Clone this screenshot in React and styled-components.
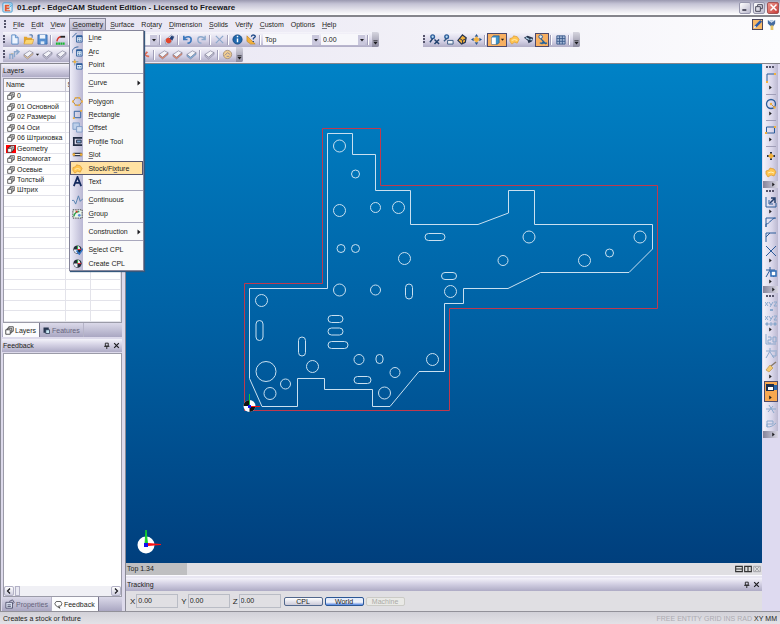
import React, { useState } from 'react';
import styled, { createGlobalStyle, css } from 'styled-components';

const GlobalStyle = createGlobalStyle`
  * { box-sizing: border-box; }
  body { margin: 0; }
  body, button, input, select {
    font-family: "Liberation Sans", Arial, sans-serif;
    font-size: 7px;
    line-height: 9px;
    color: #1c1c20;
  }
  button { border: 0; padding: 0; background: none; }
  svg { display: block; }
  u { text-underline-offset: 1px; text-decoration-thickness: 1px; text-decoration-color: #77777f; }
`;

const Window = styled.div`
  display: flex;
  flex-direction: column;
  min-height: 100vh;
  background: #e8e6f2;
`;

const TitleBar = styled.header`
  display: flex;
  align-items: center;
  height: 17px;
  padding: 0 1px 0 2px;
  background: linear-gradient(#9a99b0, #c3c2d4 25%, #e9e8ef 70%, #fff);
  border-bottom: 2px solid #85858c;
`;

const Title = styled.h1`
  flex: 1;
  margin: 0 0 0 4px;
  font-size: 8px;
  line-height: 10px;
  font-weight: bold;
  color: #17171b;
`;

const CaptionButton = styled.button`
  display: grid;
  place-items: center;
  width: 12px;
  height: 12px;
  margin-left: 2px;
  border: 1px solid ${p => (p.$close ? '#a55355' : '#9797ad')};
  border-radius: 2px;
  background: ${p => (p.$close ? 'linear-gradient(135deg, #ee9a90, #c83a37)' : 'linear-gradient(135deg, #fff, #b9b8cc)')};
`;

const MenuBar = styled.nav`
  display: flex;
  align-items: center;
  height: 15px;
  padding: 0 2px 0 4px;
  background: linear-gradient(90deg, #e5e2f2, #f3f2f8 60%, #fcfcfe);
`;

const MenuList = styled.div`
  display: flex;
  flex: 1;
  gap: 1px;
  margin-left: 2px;
`;

const MenuHolder = styled.div`
  position: relative;
`;

const MenuButton = styled.button`
  display: block;
  height: 13px;
  padding: 0 2px;
  border: 1px solid transparent;
  ${p => p.$open && css`
    border-color: #88889a;
    border-bottom-color: #cdcbe0;
    background: linear-gradient(#dedcea, #b9b7cd);
  `}
`;

const Popup = styled.div`
  position: absolute;
  z-index: 5;
  top: 12px;
  left: 0;
  display: flex;
  flex-direction: column;
  width: 75px;
  height: 241px;
  border: 1px solid #85859a;
  background: linear-gradient(90deg, #eeedf8, #b9b7d3 13px, #fafafa 13px);
  box-shadow: 1px 1px 1px #36587c;
`;

const PopupItem = styled.button`
  display: flex;
  align-items: center;
  flex: 1;
  min-height: 0;
  text-align: left;
  border: 1px solid ${p => (p.$active ? '#55556e' : 'transparent')};
  background: ${p => (p.$active ? '#ffe1a2' : 'none')};
`;

const PopupIcon = styled.span`
  flex: none;
  width: 17px;
  padding-left: 1px;
`;

const PopupLabel = styled.span`
  flex: 1;
  white-space: nowrap;
`;

const PopupRule = styled.div`
  height: 5px;
  margin-left: 18px;
  background: linear-gradient(transparent 2px, #a9a8bd 2px, #a9a8bd 3px, transparent 3px);
`;

const ToolArea = styled.div`
  display: flex;
  flex-direction: column;
  height: 32px;
  border-bottom: 1px solid #85858c;
  background: linear-gradient(90deg, #e5e2f2, #f3f2f8 60%, #fcfcfe);
`;

const ToolLine = styled.div`
  display: flex;
  height: 15px;
  padding-left: 3px;
  gap: 44px;
`;

const ToolBar = styled.div`
  display: flex;
  align-items: center;
  height: 15px;
  background: linear-gradient(#f6f5fb, #d5d2e6 60%, #b0adc6);
  border-radius: 0 2px 2px 0;
`;

const Grip = styled.span`
  flex: none;
  width: ${p => (p.$flat ? '9px' : '4px')};
  height: ${p => (p.$flat ? '3px' : '9px')};
  background: radial-gradient(circle at 1px 1px, #55546b 1px, transparent 1px) 0 0 / ${p => (p.$flat ? '3px 4px' : '4px 3px')};
`;

const ToolButton = styled.button`
  flex: none;
  display: flex;
  align-items: center;
  justify-content: center;
  width: ${p => (p.$wide ? '20px' : '14px')};
  height: 14px;
  ${p => p.$active && css`
    border: 1px solid #4d4a6c;
    background: #f7b062;
  `}
`;

const Divider = styled.span`
  flex: none;
  width: 4px;
  height: 10px;
  background: linear-gradient(90deg, transparent 1px, #a09eb8 1px, #a09eb8 2px, #fff 2px, #fff 3px, transparent 3px);
`;

const BarEnd = styled.button`
  display: flex;
  align-items: flex-end;
  justify-content: center;
  width: 7px;
  height: 15px;
  margin-left: 2px;
  padding-bottom: 2px;
  background: linear-gradient(#d6d5df, #8c8a9f);
  border-radius: 0 2px 2px 0;
`;

const SelectBox = styled.label`
  display: flex;
  align-items: center;
  width: ${p => p.$width}px;
  height: 11px;
  margin: 0 1px;
  background: #f7f7fb;

  select {
    flex: 1;
    min-width: 0;
    height: 11px;
    padding: 0 2px;
    border: 0;
    appearance: none;
    background: none;
  }

  span {
    display: grid;
    place-items: center;
    width: 7px;
    height: 10px;
    background: #c9c7dc;
  }
`;

const Workspace = styled.div`
  display: flex;
  flex: 1;
`;

const LeftDock = styled.aside`
  display: flex;
  flex-direction: column;
  flex: none;
  width: 126px;
  padding: 0 3px 0 1px;
  border-left: 1px solid #8a8a96;
  border-right: 1px solid #8a8a96;
  background: #dddaeb;
`;

const PanelHead = styled.div`
  display: flex;
  align-items: center;
  height: 13px;
  padding: 0 2px 0 1px;
  gap: 3px;
  background: linear-gradient(#f4f3fa, #d4d1e4 45%, #aeabc5);

  h2 {
    flex: 1;
    margin: 0;
    font-size: 7px;
    font-weight: normal;
  }
`;

const LayerBox = styled.div`
  height: 245px;
  margin: 1px 0 0 1px;
  border: 1px solid #9b9ba8;
  background: #fff;
  overflow: hidden;
`;

const LayerTable = styled.table`
  width: 100%;
  height: 243px;
  border-collapse: collapse;
  table-layout: fixed;

  th, td {
    height: 10px;
    padding: 0;
    font-weight: normal;
    line-height: 8px;
    text-align: left;
    white-space: nowrap;
    border-right: 1px solid #e3e3ea;
    border-bottom: 1px solid #e3e3ea;
  }
  th {
    height: 12px;
    padding: 0 2px;
    background: #f6f5f9;
    border-color: #c5c4d2;
  }
`;

const LayerName = styled.span`
  display: flex;
  align-items: center;
  gap: 1px;
  padding-left: 2px;

  span {
    padding: 0 1px;
    background: ${p => (p.$current ? '#f00' : 'none')};
  }
`;

const TabRow = styled.div`
  display: flex;
  height: 14px;
  padding-left: 1px;
  background: linear-gradient(#dbd9e9, #aaa7c2);
`;

const Tab = styled.button`
  display: flex;
  align-items: center;
  gap: 1px;
  padding: 0 3px 0 2px;
  color: ${p => (p.$active ? '#1c1c20' : '#66647c')};
  background: ${p => (p.$active ? '#fcfcfe' : 'none')};
  border-right: 1px solid ${p => (p.$active ? '#77758d' : '#b6b4c8')};
`;

const FeedbackBox = styled.div`
  display: flex;
  flex-direction: column;
  justify-content: flex-end;
  flex: 1;
  margin: 1px 0 0 1px;
  border: 1px solid #9b9ba8;
  background: #fff;
`;

const ScrollTrack = styled.div`
  display: flex;
  justify-content: space-between;
  height: 10px;
  background: #f0f0f5;

  button {
    display: grid;
    place-items: center;
    width: 10px;
    border: 1px solid #b3b2c6;
    border-radius: 2px;
    background: linear-gradient(#fff, #d0cfe0);
  }
  i {
    flex: none;
    width: 5px;
    margin: 0 auto 0 1px;
    border: 1px solid #b3b2c6;
    background: #e9e9f2;
  }
`;

const Center = styled.main`
  display: flex;
  flex-direction: column;
  flex: 1;
  min-width: 0;
`;

const Viewport = styled.div`
  flex: 1;
  overflow: hidden;
  background: linear-gradient(#0082c6, #0062a5 50%, #003f7d);
`;

const ViewStrip = styled.div`
  display: flex;
  align-items: center;
  height: 13px;
  padding-right: 1px;
  gap: 1px;
  background: #e0dfe3;
  border-bottom: 1px solid #fbfaff;

  p {
    width: 61px;
    height: 12px;
    margin: 0 auto 0 0;
    padding: 1px 0 0 1px;
    background: #bfbfc1;
  }
`;

const DockedHead = styled(PanelHead)`
  margin-top: 2px;
`;

const Tracking = styled.form`
  display: flex;
  align-items: center;
  height: 20px;
  padding-left: 4px;
  gap: 2px;
  background: #e0dfe3;
`;

const Coord = styled.label`
  display: flex;
  align-items: center;
  gap: 1px;
  margin-right: 1px;
  font-size: 8px;

  input {
    width: 42px;
    height: 14px;
    padding: 0 1px 2px;
    border: 1px solid #b9bcc5;
    background: #e0dfe3;
  }
`;

const PlaneButton = styled.button`
  width: 39px;
  height: 9px;
  line-height: 7px;
  border: 1px solid #52688c;
  border-radius: 2px;
  background: linear-gradient(#fff, #cbcad9);
  ${p => p.$active && css`
    border-color: #2b5795;
    background: linear-gradient(#dfeafc, #f3f3f8 60%, #4f83e2);
  `}
  &:disabled {
    color: #aaaaa6;
    border-color: #cbcbc6;
    background: #e9e9e6;
  }
`;

const RightDock = styled.aside`
  flex: none;
  width: 18px;
  padding: 0 2px 0 1px;
  background: #dedaf0;
`;

const SideBar = styled.div`
  display: flex;
  flex-direction: column;
  align-items: center;
  justify-content: space-between;
  height: ${p => p.$height}px;
  padding-top: 2px;
  background: linear-gradient(90deg, #f4f3fa, #d9d6ea 60%, #bbb8d0);
`;

const SideButton = styled.button`
  display: flex;
  flex-direction: column;
  align-items: center;
  justify-content: center;
  gap: 1px;
  width: 14px;
  ${p => p.$active && css`
    height: 21px;
    border: 1px solid #4d4a6c;
    background: #f7a850;
  `}
`;

const SideRule = styled.span`
  width: 10px;
  height: 1px;
  background: #a09eb8;
`;

const SideEnd = styled.button`
  display: flex;
  align-items: center;
  justify-content: flex-end;
  align-self: stretch;
  height: 7px;
  padding-right: 2px;
  background: linear-gradient(90deg, #858399, #d8d6e2);
`;

const StatusBar = styled.footer`
  display: flex;
  align-items: center;
  height: 13px;
  padding: 0 3px;
  gap: 2px;
  background: linear-gradient(#d2d1d8, #e3e2e7);
  border-top: 1px solid #929199;

  p {
    flex: 1;
    margin: 0;
  }
`;

const Flag = styled.span`
  color: ${p => (p.$on ? '#1c1c20' : '#acabb2')};
`;

const N = '#2c5c9a';
const S = '#8ba8cc';
const Y = '#f2b13c';
const block = (c) => (
  <>
    <path d="M1 6l6-4 4 2-6 5z" fill="#f3f3f8" stroke="#8a8aa0" strokeWidth=".8" />
    <path d="M1 6v2l4 3 6-5V4L5 9z" fill={c} stroke="#77778e" strokeWidth=".5" />
  </>
);
const cpl = (
  <>
    <circle cx="6" cy="6" r="4.5" fill="#222b38" />
    <path d="M6 6H2a4 4 0 0 0 4 4zM6 6V2a4 4 0 0 1 3 4z" fill="#e7edf5" />
    <path d="M6 6V2" stroke="#2fae3b" />
    <path d="M6 6h4" stroke="#e23" />
  </>
);

const shapes = {
  logo: <><rect x="1" y="1" width="10" height="10" rx="1" fill="#d9edfa" stroke="#3c97cf" /><path d="M3 3h5v2H5v1h3v2H5v1h4v1H3z" fill="#e0562f" /><path d="M8 2l2 2-2 2" stroke="#289bd7" fill="none" /></>,
  new: <><path d="M3 1h4l3 3v7H3z" fill="#eef5ff" stroke="#5a8bc6" /><path d="M7 1v3h3" fill="none" stroke="#5a8bc6" /></>,
  open: <><path d="M1 3h3l1 1h5v7H1z" fill="#e3a52f" /><path d="M3 6h9l-2 5H1z" fill="#fbd672" stroke="#c98b22" strokeWidth=".5" /><path d="M7 1h3v3" stroke={N} fill="none" /></>,
  save: <><path d="M1 1h10v10H1z" fill="#568fd0" stroke="#2e64a8" strokeWidth=".8" /><path d="M3 1h6v4H3z" fill="#eef4fc" /><path d="M4 8h4v3H4z" fill="#dce8f6" /></>,
  style: <><path d="M1 10.500h10" stroke="#18b830" strokeWidth="2.500" strokeDasharray="2 .5" /><path d="M2 8c1-5 4-5 5-5" stroke="#d8352a" strokeWidth="1.500" fill="none" /><path d="M6 3h5" stroke="#222" strokeWidth="2" /></>,
  render: <><path d="M1 7l7-6 3 2-4 7-5 1z" fill="#e9ecf3" stroke="#65769a" strokeWidth=".6" /><circle cx="5" cy="7" r="3" fill="#e2452c" /><path d="M8 2l3 1-2 4-3-2z" fill="#233f77" /></>,
  undo: <path d="M2 2v4h4M2 6c2-4 8-4 8 0 0 3-2 4-4 4" stroke="#3c78bd" strokeWidth="1.8" fill="none" />,
  redo: <path d="M10 2v4H6M10 6C8 2 2 2 2 6c0 3 2 4 4 4" stroke={S} strokeWidth="1.5" fill="none" />,
  cross: <path d="M2 2l8 8M10 2l-8 8" stroke={S} strokeWidth="1.3" />,
  info: <><circle cx="6" cy="6" r="5" fill="#1f68ac" stroke="#164a83" /><path d="M6 5v4M6 2v1.6" stroke="#fff" strokeWidth="1.6" /></>,
  help: <><path d="M1 2l9 9H5L1 8z" fill={Y} stroke="#b77f20" strokeWidth=".6" /><path d="M6 3c0-3 5-2 4 0L8 5v1M8 7.500v1.300" stroke="#1b4685" strokeWidth="1.4" fill="none" /></>,
  moveA: <><path d="M1 11V6h3v5M6 9V3h4M8 1l3 2-3 3" stroke={S} strokeWidth="1.5" fill="none" /><path d="M2 5h3" stroke="#c3b8a0" /></>,
  gray: block('#c3c1d4'),
  orange: block('#e98b6a'),
  blueBlock: block('#7fb2df'),
  tan: block('#e7c79a'),
  tree: <path d="M3 3l5 5M8 3L3 9M8 8h2" stroke="#e26b54" strokeWidth="2" />,
  spin: <><circle cx="6" cy="6" r="4.500" fill="#f2ce90" stroke="#a6917a" /><path d="M3 7l3-3 3 2M5 8h3" stroke="#8c8799" fill="none" /></>,
  zoomX: <><circle cx="4" cy="3" r="2" fill="#b9dbf0" stroke={N} strokeWidth="1.5" /><path d="M4 5L1 9M6 6l5 5M11 6l-5 5" stroke="#21426e" strokeWidth="1.6" /></>,
  zoomBox: <><circle cx="4" cy="3" r="2" fill="#b9dbf0" stroke={N} strokeWidth="1.5" /><path d="M4 5L1 8" stroke="#35577f" strokeWidth="1.5" /><path d="M5 7h6v4H5z" stroke="#35577f" fill="#eef3f8" /></>,
  orbit: <><path d="M6 1l4 3-1 5-4 2-4-4z" fill={Y} stroke="#24324e" strokeWidth="1.3" /><path d="M3 5l3 2 4-2M6 7v3" stroke="#24324e" fill="none" /></>,
  pan: <><path d="M6 0l2 3H4zM6 12l2-3H4zM0 6l3-2v4zM12 6L9 4v4z" fill="#28568f" /><path d="M6 3v6M3 6h6" stroke={Y} strokeWidth="2.5" /></>,
  cube: <><path d="M2 3l2-2h7v8l-2 2H2z" fill="#3d93c9" stroke="#184c82" strokeWidth=".7" /><path d="M2 3h5v8H2z" fill="#fff" /></>,
  stock: <><path d="M1 5l3-1 1-2 4 1 2 3-2 4-3-1-3 2-2-3z" fill="#ffc552" stroke="#d9962c" strokeWidth=".7" /><path d="M3 7l3-1 3 1" stroke="#fff0b8" fill="none" /></>,
  machine: <><path d="M1 4l4-2 6 2-1 4-4 2-1-3z" fill="#26354e" /><path d="M3 4l4 2M8 6h2" stroke="#b5d9ef" strokeWidth="1.5" /></>,
  walk: <><circle cx="4" cy="3" r="2" fill="#d8e9f4" stroke={N} /><path d="M4 5l3 3-2 3M6 7l4 4M3 10h8" stroke="#22629c" strokeWidth="1.4" fill="none" /></>,
  grid: <path d="M2 2h9v9H2zM2 5h9M2 8h9M5 2v9M8 2v9" stroke="#3c5c8c" fill="#a8bbd8" />,
  pencil: <><rect x=".5" y=".5" width="11" height="11" fill="#f8b866" stroke="#3c3a58" /><path d="M2 10l1-3 6-6 2 2-6 6z" fill="#2c5caa" /><path d="M2 10l1-3 2 2z" fill="#fff" /></>,
  bulb: <><path d="M2 1l4 3 4-3v4L8 8H5L2 5z" fill="#456ca0" /><path d="M4 1h4v2H4z" fill="#b8cde6" /><path d="M5 7h3v5H5z" fill="#e4c468" /></>,
  line: <><path d="M0 6l5-5" stroke={N} /><path d="M5 4h6v7H5z" fill="#e9f4fd" stroke={N} /><path d="M5 5h6M7 7v1M9 7v1M7 9v1M9 9v1" stroke={N} strokeWidth="1.3" /></>,
  arc: <><path d="M0 8c0-5 3-7 7-7" stroke={N} fill="none" /><path d="M5 4h6v7H5z" fill="#e9f4fd" stroke={N} /><path d="M5 5h6M7 7v1M9 7v1M7 9v1M9 9v1" stroke={N} strokeWidth="1.3" /></>,
  point: <><path d="M3 0v7M0 3h7" stroke="#7592a0" /><circle cx="3" cy="3" r="1.500" fill={Y} /><path d="M5 5h6v6H5z" fill="#e9f4fd" stroke={N} /><path d="M5 6h6M7 8v1M9 8v1" stroke={N} strokeWidth="1.3" /></>,
  polygon: <><path d="M4 2h4l3 4-3 4H4L1 6z" fill="none" stroke="#8c7a63" /><path d="M3 1h2v2H3zM7 1h2v2H7zM10 5h2v2h-2zM7 9h2v2H7zM3 9h2v2H3zM0 5h2v2H0z" fill={Y} /></>,
  rectangle: <><path d="M2.500 2.500h7v7h-7z" fill="none" stroke={N} /><path d="M1 9h2v2H1zM9 1h2v2H9z" fill={Y} /></>,
  offset: <><path d="M1 1h7v7H1z" fill="#bdcfea" stroke="#7d9bc6" /><path d="M5 5h6v6H5z" fill="#d4def0" stroke="#7d9bc6" /></>,
  profile: <><path d="M2 1v10M1 2h10M1 10h10" stroke="#222d44" strokeWidth="1.800" /><path d="M5 4.500h5v3H5z" fill="#7eaad8" stroke="#222d44" /></>,
  slot: <><rect x="1" y="4" width="10" height="4" rx="1" fill="#33384a" /><path d="M3 6h6" stroke="#fff" /><circle cx="2" cy="6" r="1.500" fill={Y} /><circle cx="10" cy="6" r="1.500" fill={Y} /></>,
  text: <path d="M2 11L6 1l4 10M3 7.500h6" stroke="#13295c" strokeWidth="1.900" fill="none" />,
  continuous: <path d="M0 7h2l2 4 3-9 2 6 3-3" stroke="#4e7dac" fill="none" />,
  group: <><path d="M1 2h10v9H1z" fill="#eaf6ec" stroke="#333" strokeDasharray="1.500 1" /><path d="M2 9c1-4 3-5 6-5" stroke="#29a04b" strokeWidth="1.500" fill="none" /><path d="M4 4h2" stroke="#d33" strokeWidth="2" /><circle cx="8" cy="8" r="1.500" fill="#5a8bd6" /></>,
  selectCpl: <>{cpl}<path d="M5 7l3 4 4-6" stroke="#2f72c4" strokeWidth="1.700" fill="none" /></>,
  createCpl: cpl,
  layer: <><path d="M5 1h6v6H5z" fill="#fff" stroke="#222" /><path d="M3 3h6v6H3z" fill="#fff" stroke="#222" /><path d="M1 5h6v6H1z" fill="#fff" stroke="#222" /></>,
  feature: <><path d="M2 2h7v7H2z" fill="#25334d" /><path d="M5 5h5v5H5z" fill="#c8e9f5" stroke="#25334d" /></>,
  props: <><path d="M1 4h8v7H1z" fill="#d9e0ef" stroke="#4a4a66" /><path d="M3 7h4M3 9h4M5 3l4-2 2 3-2 2" stroke="#4a4a66" fill="none" /></>,
  bubble: <path d="M3 2h6q3 3 0 6H6l2 3-5-3Q-1 5 3 2z" fill="#fff" stroke="#333" />,
  poly: <><path d="M2 11V2h8" stroke={N} fill="none" /><path d="M1 9h2v2H1zM9 1h2v2H9z" fill={Y} /></>,
  circle: <><circle cx="6" cy="6" r="4.500" stroke={N} strokeWidth="1.300" fill="none" /><path d="M6 6l3 3" stroke="#b98e47" /><circle cx="6" cy="6" r="1.200" fill={Y} /><circle cx="9.500" cy="9.500" r="1.200" fill={Y} /></>,
  rect: <><path d="M1.500 3h8v6h-8z" stroke={N} fill="none" /><path d="M0 8h2v2H0zM9 2h2v2H9z" fill={Y} /></>,
  star: <><path d="M6 2v8M2 6h8" stroke="#25334d" strokeWidth="2" /><path d="M6 3l3 3-3 3-3-3z" fill={Y} /></>,
  trim: <><path d="M1 1v10h10V7M4 4v4h4" stroke={N} fill="none" /><path d="M6 2h4v5M5 7l5-5" stroke="#25406e" strokeWidth="1.500" fill="none" /></>,
  fillet: <path d="M1 11V8c4 0 5-6 10-6M1 11V2h9" stroke={N} fill="none" />,
  chamfer: <path d="M1 11V6l4-4h6M1 6V2h4" stroke={N} fill="none" />,
  ex: <path d="M1 1l10 10M11 1L1 11" stroke={N} />,
  modify: <><path d="M1 4h9M5 1v3l-4 7M5 5l4 6" stroke={N} fill="none" /><path d="M6 5h5v5H6z" fill="#fff" stroke="#2b6bb5" strokeWidth="1.500" /></>,
  coords: <><path d="M0 2l3 4M3 2L0 6M4 2l2 3M8 2L5 7M9 2h3L9 6h3" stroke={S} fill="none" /><path d="M5 9h3v2H5z" fill={S} /></>,
  coordsPair: <><path d="M0 2l3 4M3 2L0 6M4 2l2 3M8 2L5 7M9 2h3L9 6h3" stroke={S} fill="none" /><path d="M1 9h2v2H1zM9 9h2v2H9zM4 10h4M6 8v4" fill={S} stroke={S} /></>,
  dim: <path d="M1 1v10h10M3 4h3v3H3v3h3M8 4h3v5H8z" stroke={S} fill="none" />,
  angle: <path d="M1 4h9M5 1v3l-4 7M5 5l4 6M11 3v6H7" stroke={S} fill="none" />,
  brush: <><path d="M6 5l5-4" stroke="#87796a" strokeWidth="1.500" /><path d="M1 9l4-5 3 3-4 4z" fill="#f2ca73" stroke="#bb9554" strokeWidth=".7" /></>,
  camera: <><path d="M1 2h8v7H1z" fill="#1d2f4e" /><path d="M3 5h5v3H3z" fill="#fff" /><path d="M9 3h3v5H9z" fill="#2a67ae" /></>,
  spark: <path d="M1 6h10M4 2l5 8M8 3L3 9" stroke={S} />,
  curveG: <path d="M2 10V4h6v3H2v3c4 0 6-1 9-4" stroke={S} fill="none" />,
  split: <path d="M1 2h10v8H1zM1 6h10" stroke="#333" strokeWidth="1.700" fill="#ddd" />,
  splitV: <path d="M1 2h10v8H1zM6 2v8" stroke="#333" strokeWidth="1.700" fill="#ddd" />,
  closeV: <path d="M1 2h10v8H1zM3 3l6 6M9 3L3 9" stroke="#8b8b92" fill="#ddd" />,
  pin: <path d="M4 2h5v5H4zM2 7.500h9M6.500 8v4" stroke="#222" fill="none" strokeWidth="1.600" />,
  close: <path d="M2 2l8 8M10 2l-8 8" stroke="#1c1c20" strokeWidth="2" />,
  closeWhite: <path d="M2 2l8 8M10 2l-8 8" stroke="#fff" strokeWidth="2" />,
  min: <path d="M2 9h6" stroke="#3a3a4c" strokeWidth="2.500" />,
  restore: <path d="M4 4V1h7v6H8M1 4h7v7H1z" stroke="#4a4a5c" strokeWidth="1.500" fill="none" />,
  down: <path d="M2 4h8L6 9z" fill="#1c1c20" />,
  right: <path d="M3 1l6 5-6 5z" fill="#1c1c20" />,
  more: <><path d="M1 2h10" stroke="#1c1c20" strokeWidth="2" /><path d="M1 5h10l-5 6z" fill="#1c1c20" /></>,
  left2: <path d="M8 1L3 6l5 5" stroke="#1c1c20" strokeWidth="2.500" fill="none" />,
  right2: <path d="M4 1l5 5-5 5" stroke="#1c1c20" strokeWidth="2.500" fill="none" />,
};

const Icon = ({ name, size = 11 }) => (
  <svg width={size} height={size} viewBox="0 0 12 12" aria-hidden="true">{shapes[name]}</svg>
);

// '&' marks the access key
const Label = ({ text }) => {
  const i = text.indexOf('&');
  if (i < 0) return text;
  return <>{text.slice(0, i)}<u>{text[i + 1]}</u>{text.slice(i + 2)}</>;
};

const menus = ['&File', '&Edit', '&View', '&Geometry', '&Surface', 'Ro&tary', '&Dimension', '&Solids', 'Ver&ify', '&Custom', 'Options', '&Help'];

const geometryItems = [
  ['&Line', 'line'], ['&Arc', 'arc'], ['Point', 'point'], null,
  ['&Curve', null, true], null,
  ['Po&lygon', 'polygon'], ['&Rectangle', 'rectangle'], ['&Offset', 'offset'], ['Pro&file Tool', 'profile'],
  ['&Slot', 'slot'], ['Stock/Fi&xture', 'stock'], ['Text', 'text'], null,
  ['&Continuous', 'continuous'], ['&Group', 'group'], null,
  ['Construction', null, true], null,
  ['S&elect CPL', 'selectCpl'], ['Create CPL', 'createCpl'],
];

const layers = ['0', '01 Основной', '02 Размеры', '04 Оси', '06 Штриховка', 'Geometry', 'Вспомогат', 'Осевые', 'Толстый', 'Штрих'];

// [cx, cy, r]
const holes = [
  [339.5, 146, 6], [355.5, 174, 4], [339.5, 210.5, 6], [375.5, 207.5, 5], [398.5, 207.5, 6],
  [341, 248.5, 4], [355.5, 248.5, 4], [404.5, 258.5, 6], [339.5, 290, 6], [375.5, 290, 5],
  [450.5, 291.5, 6], [261.5, 300.5, 6], [266, 371.5, 10], [312.5, 366.5, 6], [285.5, 384, 5],
  [270, 393.5, 6], [359, 359.5, 5], [395, 372.5, 5], [384.5, 393, 6], [432.5, 359.5, 6],
  [529, 237, 6], [503, 260.5, 5], [584.5, 260.5, 6], [609.5, 253, 4], [640, 237, 6],
];

// [x, y, width, height]
const slots = [
  [425, 233.5, 20, 7], [441.5, 272.5, 15, 7], [405.5, 284, 7, 15], [256, 320.5, 7, 20], [298.5, 337, 7, 19],
  [328, 315.5, 15, 7], [328, 328, 15, 7], [328, 341.5, 20, 7], [376, 354.5, 7, 9], [354, 376.5, 17, 7],
];

const Drawing = () => (
  <svg width="636" height="499" viewBox="126 64 636 499" fill="none" role="img" aria-label="Part">
    <path d="M322.500 128.500H380.500V185.500H657.500V308.500H449.500V410.500H244.500V283.500H322.500z" stroke="#c0394d" />
    <g stroke="#c9e0f0">
      <path d="M327.500 133.500H352.500V154.500H375.500V190.500H410.500V224.500H478L508.500 213V190.500H534.500V224.500H652.500V249L629 272.500H540.500L508 288.500H463.500V303.500H444.500V371.500H419L390 406.500H372.500V389.500H324.500V378.500H297.500V406.500H262L249.500 378.500V288.500H327.500z" />
      {holes.map(([x, y, r]) => <circle key={`${x}-${y}`} cx={x} cy={y} r={r} />)}
      {slots.map(([x, y, w, h]) => <rect key={`${x}-${y}`} x={x} y={y} width={w} height={h} rx="3.500" />)}
    </g>
    <circle cx="249.500" cy="406" r="6" fill="#fff" />
    <path d="M249.500 406V400A6 6 0 0 0 243.500 406zM249.500 406V412A6 6 0 0 0 255.500 406z" fill="#111" />
    <path d="M249.500 406V394" stroke="#1bc22d" />
    <path d="M250 406.500h10" stroke="#f11" />
    <path d="M248 405h3v3h-3z" fill="#11e" />
    <circle cx="146" cy="545" r="8.500" fill="#fff" />
    <path d="M145 544l1-14 1.500 14z" fill="#16d42a" stroke="#16d42a" />
    <path d="M147 543.500l14 1-14 1z" fill="#f11" stroke="#f11" />
    <path d="M144 543h4v4h-4z" fill="#11e" />
  </svg>
);

const Tool = ({ name, ...rest }) => <ToolButton aria-label={name} {...rest}><Icon name={name} /></ToolButton>;

const DropDown = ({ label, value, width }) => (
  <SelectBox $width={width}>
    <select aria-label={label}><option>{value}</option></select>
    <span><Icon name="down" size={6} /></span>
  </SelectBox>
);

const Side = ({ name, menu, active }) => (
  <SideButton $active={active} aria-label={name}>
    <Icon name={name} size={12} />
    {menu && <Icon name="right" size={5} />}
  </SideButton>
);

const End = () => <BarEnd aria-label="More"><Icon name="more" size={5} /></BarEnd>;

const App = () => {
  const [open, setOpen] = useState('&Geometry');

  return (
    <>
      <GlobalStyle />
      <Window>
        <TitleBar>
          <Icon name="logo" size={11} />
          <Title>01.epf - EdgeCAM Student Edition - Licensed to Freeware</Title>
          <CaptionButton aria-label="Minimize"><Icon name="min" size={8} /></CaptionButton>
          <CaptionButton aria-label="Restore"><Icon name="restore" size={8} /></CaptionButton>
          <CaptionButton $close aria-label="Close"><Icon name="closeWhite" size={9} /></CaptionButton>
        </TitleBar>
        <MenuBar>
          <Grip />
          <MenuList>
            {menus.map(text => (
              <MenuHolder key={text}>
                <MenuButton $open={open === text} onClick={() => setOpen(open === text ? '' : text)}><Label text={text} /></MenuButton>
                {text === '&Geometry' && open === text && (
                  <Popup>
                    {geometryItems.map((item, i) => item ? (
                      <PopupItem key={item[0]} $active={item[1] === 'stock'}>
                        <PopupIcon>{item[1] && <Icon name={item[1]} />}</PopupIcon>
                        <PopupLabel><Label text={item[0]} /></PopupLabel>
                        {item[2] && <Icon name="right" size={6} />}
                      </PopupItem>
                    ) : <PopupRule key={i} />)}
                  </Popup>
                )}
              </MenuHolder>
            ))}
          </MenuList>
          <Tool name="pencil" />
          <Tool name="bulb" />
        </MenuBar>
        <ToolArea>
          <ToolLine>
            <ToolBar>
              <Grip />
              <Tool name="new" /><Tool name="open" /><Tool name="save" />
              <Divider />
              <Tool name="style" />
              <DropDown label="Layer" value="Geometry" width={89} />
              <Divider />
              <Tool name="render" />
              <Divider />
              <Tool name="undo" /><Tool name="redo" />
              <Divider />
              <Tool name="cross" />
              <Divider />
              <Tool name="info" /><Tool name="help" />
              <Divider />
              <DropDown label="View" value="Top" width={56} />
              <DropDown label="Level" value="0.00" width={44} />
              <Divider />
              <End />
            </ToolBar>
            <ToolBar>
              <Grip />
              <Tool name="zoomX" /><Tool name="zoomBox" /><Tool name="orbit" /><Tool name="pan" />
              <Divider />
              <ToolButton $active $wide aria-label="Shading"><Icon name="cube" size={10} /><Icon name="down" size={5} /></ToolButton>
              <Tool name="stock" /><Tool name="machine" /><Tool name="walk" $active />
              <Divider />
              <Tool name="grid" />
              <Divider />
              <End />
            </ToolBar>
          </ToolLine>
          <ToolLine>
            <ToolBar>
              <Grip />
              <Tool name="moveA" /><Tool name="tan" />
              <Icon name="down" size={5} />
              <Tool name="gray" /><Tool name="gray" /><Tool name="gray" />
              <Tool name="tan" /><Tool name="gray" /><Tool name="orange" /><Tool name="gray" />
              <Tool name="tree" />
              <Divider />
              <Tool name="orange" /><Tool name="orange" /><Tool name="blueBlock" />
              <Divider />
              <Tool name="gray" />
              <Divider />
              <Tool name="spin" />
              <End />
            </ToolBar>
          </ToolLine>
        </ToolArea>
        <Workspace>
          <LeftDock>
            <PanelHead><h2>Layers</h2><Icon name="pin" size={7} /><Icon name="close" size={7} /></PanelHead>
            <LayerBox>
              <LayerTable>
                <colgroup><col width="61" /><col width="25" /><col /></colgroup>
                <thead><tr><th>Name</th><th>S</th><th /></tr></thead>
                <tbody>
                  {Array.from({ length: 22 }, (_, i) => (
                    <tr key={i}>
                      <td>
                        {layers[i] && (
                          <LayerName $current={layers[i] === 'Geometry'}>
                            <span><Icon name="layer" size={8} /></span>{layers[i]}
                          </LayerName>
                        )}
                      </td>
                      <td /><td />
                    </tr>
                  ))}
                </tbody>
              </LayerTable>
            </LayerBox>
            <TabRow>
              <Tab $active><Icon name="layer" size={9} />Layers</Tab>
              <Tab><Icon name="feature" size={9} />Features</Tab>
            </TabRow>
            <DockedHead><h2>Feedback</h2><Icon name="pin" size={7} /><Icon name="close" size={7} /></DockedHead>
            <FeedbackBox>
              <ScrollTrack>
                <button aria-label="Scroll left"><Icon name="left2" size={6} /></button>
                <i />
                <button aria-label="Scroll right"><Icon name="right2" size={6} /></button>
              </ScrollTrack>
            </FeedbackBox>
            <TabRow>
              <Tab><Icon name="props" size={10} />Properties</Tab>
              <Tab $active><Icon name="bubble" size={9} />Feedback</Tab>
            </TabRow>
          </LeftDock>
          <Center>
            <Viewport><Drawing /></Viewport>
            <ViewStrip>
              <p>Top 1.34</p>
              <Icon name="split" size={8} /><Icon name="splitV" size={8} /><Icon name="closeV" size={8} />
            </ViewStrip>
            <DockedHead><h2>Tracking</h2><Icon name="pin" size={7} /><Icon name="close" size={7} /></DockedHead>
            <Tracking onSubmit={e => e.preventDefault()}>
              {['X', 'Y', 'Z'].map(axis => <Coord key={axis}>{axis}<input defaultValue="0.00" /></Coord>)}
              <PlaneButton type="button">CPL</PlaneButton>
              <PlaneButton type="button" $active>World</PlaneButton>
              <PlaneButton type="button" disabled>Machine</PlaneButton>
            </Tracking>
          </Center>
          <RightDock>
            <SideBar $height={124}>
              <Grip $flat />
              <Side name="poly" menu /><SideRule />
              <Side name="circle" menu /><SideRule />
              <Side name="rect" menu /><SideRule />
              <Side name="star" /><Side name="stock" />
              <SideEnd aria-label="More"><Icon name="right" size={5} /></SideEnd>
            </SideBar>
            <SideBar $height={105}>
              <Grip $flat />
              <Side name="trim" menu /><Side name="fillet" /><Side name="chamfer" />
              <Side name="ex" menu /><Side name="modify" menu />
              <SideEnd aria-label="More"><Icon name="right" size={5} /></SideEnd>
            </SideBar>
            <SideBar $height={145}>
              <Grip $flat />
              <Side name="coords" /><Side name="coordsPair" menu />
              <Side name="dim" /><Side name="angle" /><Side name="brush" menu />
              <Side name="camera" menu active />
              <Side name="spark" /><Side name="curveG" />
              <SideEnd aria-label="More"><Icon name="right" size={5} /></SideEnd>
            </SideBar>
          </RightDock>
        </Workspace>
        <StatusBar>
          <p>Creates a stock or fixture</p>
          {['FREE', 'ENTITY', 'GRID', 'INS', 'RAD'].map(flag => <Flag key={flag}>{flag}</Flag>)}
          <Flag $on>XY</Flag><Flag $on>MM</Flag>
        </StatusBar>
      </Window>
    </>
  );
};

export default App;
